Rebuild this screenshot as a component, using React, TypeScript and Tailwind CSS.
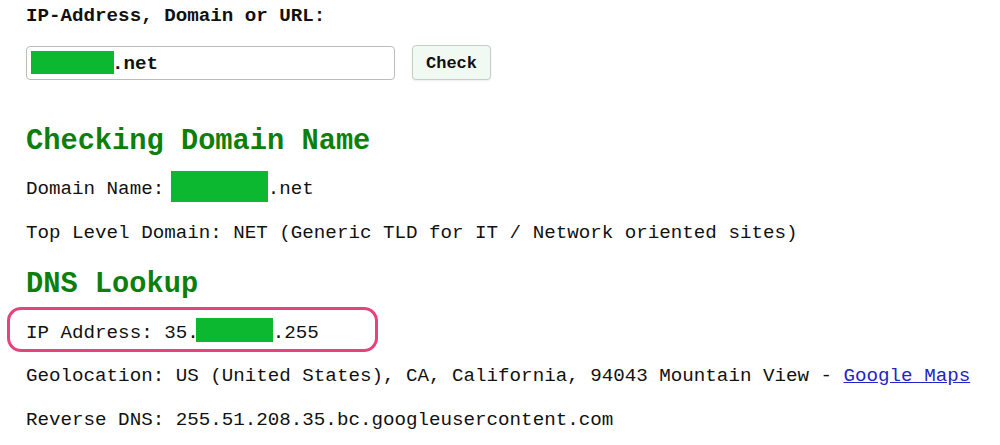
const mono = "font-['Liberation_Mono','Courier_New',monospace]";

function Redacted({ w, h }: { w: number; h: number }) {
  return <span className="inline-block bg-[#0cb82f]" style={{ width: w, height: h }} />;
}

function Line({ children, className = '' }: { children: React.ReactNode; className?: string }) {
  return <div className={`flex h-[22px] items-center whitespace-pre text-[19.2px] leading-[22px] text-[#111] ${className}`}>{children}</div>;
}

export default function App() {
  return (
    <div className={`min-h-[445px] w-[1000px] bg-white pl-[26px] ${mono}`}>
      {/* Form */}
      <div className="pt-[5px] text-[19.2px] font-bold leading-[22px] text-[#111]">IP-Address, Domain or URL:</div>
      <div className="mt-[18px] flex items-center gap-[17px]">
        <div className="flex h-[34px] w-[369px] items-center rounded-[4px] border border-[#bcbcbc] bg-white pl-[4px] text-[19.2px] font-bold text-[#111]">
          <Redacted w={83} h={23} />
          <span className="-ml-[2px] pt-[3px]">.net</span>
        </div>
        <button className="h-[35px] w-[79px] rounded-[4px] border border-[#c6cdc6] bg-[#f1faf2] pt-[3px] text-[17px] font-bold text-[#111] shadow-[0_1px_2px_rgba(0,0,0,0.08)]">
          Check
        </button>
      </div>

      {/* Domain section */}
      <h2 className="mt-[45px] h-[34px] text-[28.7px] font-bold leading-[34px] text-[#0c7f0c]">Checking Domain Name</h2>
      <Line className="mt-[19px]">
        <span>Domain Name: </span>
        <span className="-ml-[5px]"><Redacted w={97} h={31} /></span>
        <span>.net</span>
      </Line>
      <Line className="mt-[22px]">Top Level Domain: NET (Generic TLD for IT / Network oriented sites)</Line>

      {/* DNS section */}
      <h2 className="mt-[24px] h-[34px] text-[28.7px] font-bold leading-[34px] text-[#0c7f0c]">DNS Lookup</h2>
      <div className="-ml-[19px] mt-[5px] flex h-[45px] w-[371px] items-center rounded-[14px] border-[3px] border-[#e6437b] pl-[16px] pt-[6px]">
        <Line>
          <span>IP Address: 35.</span>
          <span className="-ml-[3px]"><Redacted w={77} h={24} /></span>
          <span>.255</span>
        </Line>
      </div>
      <Line className="mt-[13px]">
        <span>Geolocation: US (United States), CA, California, 94043 Mountain View - </span>
        <a href="#" className="text-[#2323c8] underline">Google Maps</a>
      </Line>
      <Line className="mt-[22px]">Reverse DNS: 255.51.208.35.bc.googleusercontent.com</Line>
    </div>
  );
}
